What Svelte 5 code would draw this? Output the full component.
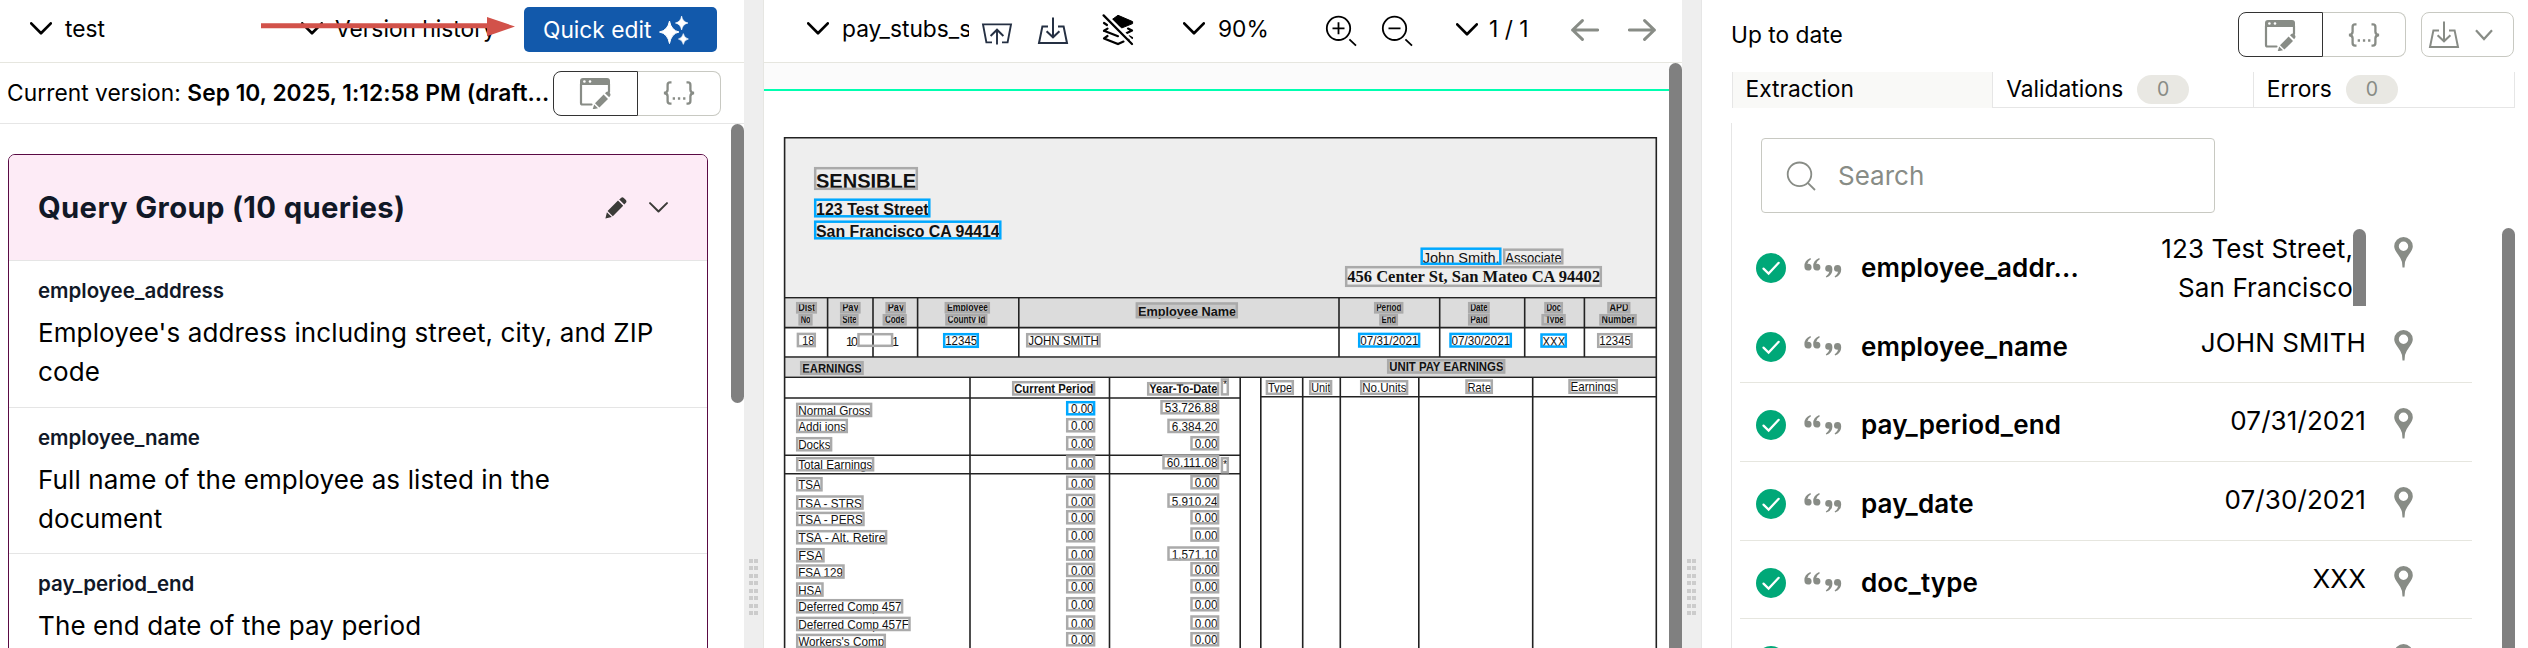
<script>
  const queries = [
    { name: 'employee_address', lines: ["Employee's address including street, city, and ZIP", 'code'] },
    { name: 'employee_name', lines: ['Full name of the employee as listed in the', 'document'] },
    { name: 'pay_period_end', lines: ['The end date of the pay period', ''] }
  ];

  const fields = [
    { name: 'employee_addr...', value: '123 Test Street, San Francisco', scroll: true },
    { name: 'employee_name', value: 'JOHN SMITH' },
    { name: 'pay_period_end', value: '07/31/2021' },
    { name: 'pay_date', value: '07/30/2021' },
    { name: 'doc_type', value: 'XXX' },
    { name: '', value: '' }
  ];

  const tabs = [
    { label: 'Extraction', active: true },
    { label: 'Validations', count: 0 },
    { label: 'Errors', count: 0 }
  ];

  const dots = Array.from({ length: 8 }, (_, i) => i);

  // Recognised text on the document: [text, x, y, width, height, options]
  const B = { blue: true };
  const H = { bold: true, size: 10, base: 9.2, tint: true };
  const marks = [
    ['SENSIBLE', 814, 167, 104, 23, { bold: true, size: 19.5, base: 20.7, pad: 2 }],
    ['123 Test Street', 814, 198.5, 116.5, 19, { ...B, bold: true, size: 15.6, base: 16.5, pad: 2 }],
    ['San Francisco CA 94414', 814, 220.5, 187.5, 19, { ...B, bold: true, size: 15.6, base: 16.5, pad: 2 }],
    ['John Smith,', 1420.5, 247.5, 81, 17.5, { ...B, size: 14.5, base: 15.2 }],
    ['Associate', 1503, 248.5, 60.5, 16, { size: 14, base: 14.2 }],
    ['456 Center St, San Mateo CA 94402', 1345, 266, 257, 21, { bold: true, serif: true, size: 16.5, base: 16.3 }],
    ['Dist', 796, 302, 21, 11.5, H], ['No', 798.5, 314, 14, 11.5, H],
    ['Pay', 840, 302, 20.5, 11.5, H], ['Site', 840, 314, 18.5, 11.5, H],
    ['Pay', 885.5, 302, 20.3, 11.5, H], ['Code', 882.7, 314, 24, 11.5, H],
    ['Employee', 944.7, 302, 45.3, 11.5, H], ['County Id', 945.3, 314, 42, 11.5, H],
    ['Employee Name', 1135.7, 302.3, 102.3, 16, { bold: true, size: 13.5, base: 13.4, tint: true }],
    ['Period', 1374, 302, 29.3, 11.5, H], ['End', 1379.3, 314, 18.7, 11.5, H],
    ['Date', 1468, 302, 21.7, 11.5, H], ['Paid', 1468, 314, 21.7, 11.5, H],
    ['Doc', 1544.3, 302, 18.7, 11.5, H], ['Type', 1541.5, 314, 24.2, 11.5, { ...H, pad: 4 }],
    ['APD', 1607.3, 302, 23, 11.5, H], ['Number', 1599.3, 314, 37.4, 11.5, H],
    ['18', 796.7, 332.7, 19.3, 14.6, { pad: 5.5 }],
    ['', 857.3, 333, 36, 14, {}],
    ['12345', 943, 333, 36, 15, B],
    ['JOHN SMITH', 1026, 333, 74.7, 14.5, {}],
    ['07/31/2021', 1358, 332.7, 62.3, 15, B],
    ['07/30/2021', 1449.3, 332.7, 62.7, 15, B],
    ['XXX', 1540.3, 333.3, 26.7, 14.5, B],
    ['12345', 1597, 333, 35.7, 15, {}],
    ['EARNINGS', 800, 361, 63.7, 14, { bold: true, base: 11.8, size: 12.5, tint: true }],
    ['UNIT PAY EARNINGS', 1387, 359, 118.3, 14.7, { bold: true, size: 12.5, tint: true }],
    ['Current Period', 1012, 381, 83.3, 14.7, { bold: true }],
    ['Year-To-Date', 1147, 382, 72.3, 13.7, { bold: true, base: 11.4 }],
    ['*', 1220.7, 378.3, 8.3, 17.3, { size: 11, base: 10 }],
    ['*', 1220.7, 457, 8.3, 16.5, { size: 11, base: 11 }],
    ['Type', 1265.7, 380, 28.3, 15, {}], ['Unit', 1309, 380, 23.3, 15, {}],
    ['No.Units', 1360, 380, 48.3, 15, {}], ['Rate', 1465.3, 379.3, 27.7, 14.7, {}],
    ['Earnings', 1568.3, 379, 49.7, 15, {}]
  ];

  // Earnings rows: [label, width, top, current top, year to date, left, top]
  const rows = [
    ['Normal Gross', 76.3, 402.7, 401, '53,726.88', 1160.3, 400],
    ['Addi ions', 52, 418.7, 418, '6,384.20', 1167.3, 418.7],
    ['Docks', 36.3, 437, 436, '0.00', 1190.3, 436],
    ['Total Earnings', 78.3, 457, 455.3, '60,111.08', 1162.3, 455],
    ['TSA', 26.7, 477, 475.5, '0.00', 1190.3, 475],
    ['TSA - STRS', 67.7, 495.3, 493.7, '5,910.24', 1167.3, 493.3],
    ['TSA - PERS', 68.7, 511.7, 510, '0.00', 1190.3, 510],
    ['TSA - Alt. Retire', 91.3, 530, 528, '0.00', 1190.3, 527.3],
    ['FSA', 28.7, 548, 546.3, '1,571.10', 1167.3, 546.3],
    ['FSA 129', 48.7, 564.3, 562.7, '0.00', 1190.3, 562],
    ['HSA', 27.7, 582.3, 579, '0.00', 1190.3, 579],
    ['Deferred Comp 457', 107.3, 599, 597, '0.00', 1190.3, 597],
    ['Deferred Comp 457F', 114.7, 616.7, 615.3, '0.00', 1190.3, 615.3],
    ["Workers's Comp", 90, 633.7, 632, '0.00', 1190.3, 632]
  ];
  rows.forEach(([label, w, y, cy, ytd, x, yy], i) => {
    marks.push([label, 796, y, w, 14.5, {}]);
    marks.push(['0.00', 1066, cy, 29.3, 14.5, { pad: 5, blue: i === 0 }]);
    marks.push([ytd, x, yy, 1219.3 - x, 14.5, { pad: 4.5 }]);
  });
</script>

{#snippet chevron(cls)}
  <svg class={cls} width="22" height="13" viewBox="0 0 22 13"><path d="M1.2 1.4 11 11.2 20.8 1.4" /></svg>
{/snippet}

{#snippet formIcon()}
  <svg width="32" height="32" viewBox="0 0 32 32" fill="none">
    <path d="M2 7V26Q2 27.5 3.5 27.5H12.5M30 7V15" stroke="#888c86" stroke-width="2.2" stroke-linecap="round" />
    <path d="M1 8V4Q1 1 4 1H28Q31 1 31 4V8Z" fill="#888c86" />
    <circle cx="5.4" cy="4.5" r="1.3" fill="#fff" /><circle cx="11" cy="4.5" r="1.3" fill="#fff" />
    <path d="M16 26.2 24.6 17.6 29 22 20.4 30.6ZM26 16.3 27.3 15Q28.6 14 30 15.3L31 16.3Q32 17.6 31 19L30.2 20.3ZM15.2 27.6 19 31.2 13.6 32.4Z" fill="#888c86" />
  </svg>
{/snippet}

{#snippet jsonIcon()}
  <svg width="32" height="24" viewBox="0 0 32 24" fill="none" stroke="#888c86" stroke-width="2.3">
    <path d="M8.5 1.4H7Q4.6 1.4 4.6 4V8.8Q4.6 11.6 1 12Q4.6 12.4 4.6 15.2V20Q4.6 22.6 7 22.6H8.5M23.5 1.4H25Q27.4 1.4 27.4 4V8.8Q27.4 11.6 31 12Q27.4 12.4 27.4 15.2V20Q27.4 22.6 25 22.6H23.5" />
    <path d="M9.7 17.5H12M14.9 17.5H17.2M20.1 17.5H22.4" />
  </svg>
{/snippet}

{#snippet download(color)}
  <svg width="32" height="28" viewBox="0 0 32 28" fill="none" stroke={color} stroke-width="2">
    <path d="M11 9.4H5.4L2 26H30L26.6 9.4H21M16 0.5V20M9.6 14.2 16 20.3 22.4 14.2" />
  </svg>
{/snippet}

{#snippet grip()}
  <div class="gutter">
    <div class="grip">{#each dots as d (d)}<i></i><i></i>{/each}</div>
  </div>
{/snippet}

<div class="app">
  <section class="left">
    <div class="toolbar">
      <div class="menu doc">{@render chevron('chev')}<span>test</span></div>
      <div class="menu history">{@render chevron('chev')}<span>Version history</span></div>
      <button class="quick">
        <span>Quick edit</span>
        <svg width="32" height="30" viewBox="0 0 32 30" fill="#fff">
          <path d="M11.5 6Q13.2 15.4 21 17Q13.2 18.6 11.5 28.6Q9.8 18.6 1.5 17Q9.8 15.4 11.5 6Z" stroke="#fff" stroke-width="1" />
          <path d="M23.6 1Q24.6 6.8 30 8Q24.6 9.2 23.6 15Q22.6 9.2 17.4 8Q22.6 6.8 23.6 1ZM25.3 18.6Q26.1 23 30.4 24Q26.1 25 25.3 29.4Q24.5 25 20.4 24Q24.5 23 25.3 18.6Z" stroke="#fff" stroke-width=".6" />
        </svg>
      </button>
      <svg class="arrow" width="254" height="20" viewBox="0 0 254 20" fill="#d2524a"><path d="M0 6.2H226V0L254 9.5 226 19.2V11.2H0Z" /></svg>
    </div>
    <div class="version">
      <p>Current version: <b>Sep 10, 2025, 1:12:58 PM (draft...</b></p>
      <div class="segmented">
        <span class="seg on">{@render formIcon()}</span><span class="seg">{@render jsonIcon()}</span>
      </div>
    </div>
    <div class="scroller">
      <div class="card">
        <header>
          <h2>Query Group (10 queries)</h2>
          <svg width="22" height="22" viewBox="0 0 22 22" fill="#3b3b38">
            <path d="M2.6 14 13 3.6 18.2 8.8 7.8 19.2ZM14.2 2.6 16 .9Q17.4-.2 18.8 1L20.9 3Q22 4.4 20.9 5.8L19.3 7.5ZM1.9 15.2 6.8 20 .4 21.6Z" />
          </svg>
          {@render chevron('chev dark')}
        </header>
        {#each queries as q (q.name)}
          <article>
            <h3>{q.name}</h3>
            <p>{q.lines[0]}<br />{q.lines[1]}</p>
          </article>
        {/each}
      </div>
      <div class="bar"></div>
    </div>
  </section>

  {@render grip()}

  <section class="middle">
    <div class="toolbar">
      <div class="menu file">{@render chevron('chev')}<span>pay_stubs_s</span></div>
      <svg class="up" width="32" height="22" viewBox="0 0 32 22" fill="none" stroke="#253043" stroke-width="1.9">
        <path d="M11 19.4H5.4L2 1.4H30L26.6 19.4H21M16 21.5V7M9.6 13 16 6.7 22.4 13" />
      </svg>
      <div class="down">{@render download('#253043')}</div>
      <svg class="layers" width="32" height="32" viewBox="0 0 32 32">
        <path d="M9.5 6 16 1.3 30.6 7.6V9.6L19.6 14Z" stroke="#000" stroke-linejoin="round" />
        <g fill="none" stroke="#000" stroke-width="2.2" stroke-linecap="round">
          <path d="M2 9 5 11M2 16.8 16 22.2M30 16.6 24.4 19.2M2 24.4 16 30 21.5 27.6M27.5 25 30 24M5.5 14.6 2 16.8M26 14.6 30 16.6M5.5 22 2 24.4M27.4 22.4 30 24" />
        </g>
        <path d="M3.5 0 32 28.5" stroke="#fff" stroke-width="2.2" />
        <path d="M1.6 1.4 30 30" stroke="#000" stroke-width="2.2" stroke-linecap="round" />
      </svg>
      <div class="menu zoom">{@render chevron('chev')}<span>90%</span></div>
      <svg class="zin" width="32" height="32" viewBox="0 0 32 32" fill="none" stroke="#000" stroke-width="1.8">
        <circle cx="13.5" cy="13.3" r="11.7" /><path d="M7.5 13.3H19.5M13.5 7.3V19.3M24.4 24.4 31 30.6" />
      </svg>
      <svg class="zout" width="32" height="32" viewBox="0 0 32 32" fill="none" stroke="#000" stroke-width="1.8">
        <circle cx="13.5" cy="13.3" r="11.7" /><path d="M7.5 13.3H19.5M24.4 24.4 31 30.6" />
      </svg>
      <div class="menu page">{@render chevron('chev')}<span>1 / 1</span></div>
      <svg class="prev" width="28" height="22" viewBox="0 0 28 22"><path d="M11.4 1.6 1.6 11 11.4 20.4M1.6 11H26.6" /></svg>
      <svg class="next" width="28" height="22" viewBox="0 0 28 22"><path d="M16.6 1.6 26.4 11 16.6 20.4M26.4 11H1.4" /></svg>
    </div>
    <div class="viewer">
      <svg class="document" width="905" height="585" viewBox="764 63 905 585">
        <rect x="764" y="63" width="905" height="26" fill="#fbfbfb" />
        <rect x="764" y="89" width="905" height="2" fill="#00ffb0" />
        <rect x="785" y="138" width="871" height="159" fill="#eee" />
        <rect x="785" y="299" width="871" height="28" fill="#dcdcdc" />
        <rect x="785" y="358" width="871" height="18" fill="#dcdcdc" />
        <g stroke="#222" stroke-width="1.6" fill="none">
          <path d="M784.6 648V137.8H1656.3V648" />
          <path d="M784 297.8H1656M784 327.6H1656M784 357H1656M784 377.2H1656" />
          <path d="M827.6 298V357M873 298V357M917.6 298V357M1018.8 298V357M1339 298V357M1439.7 298V357M1524.7 298V357M1584.4 298V357" />
          <path d="M784 398H1240M784 455.2H1240M784 473.7H1240M1260 396.8H1656" />
          <path d="M970 377V648M1109.5 377V648M1240.2 377V648M1260.8 377V648M1302.7 377V648M1340.3 377V648M1418.8 377V648M1532.7 377V648" />
        </g>
        <text x="846" y="345.7" font-size="12.5" textLength="12">10</text>
        <text x="892" y="345.7" font-size="12.5">1</text>
        {#each marks as [text, x, y, w, h, o], i (i)}
          {#if o.tint}
            <rect {x} {y} width={w} height={h} fill="#c8c8c8" />
          {/if}
          {#if text.length > 1}
            <text
              x={x + (o.pad ?? 2.2)}
              y={y + (o.base ?? 12.3)}
              textLength={w - 1.8 - (o.pad ?? 2.2)}
              lengthAdjust="spacingAndGlyphs"
              class:bold={o.bold}
              class:serif={o.serif}
              font-size={o.size ?? 12.8}>{text}</text>
          {:else if text}
            <text x={x + 2.3} y={y + o.base} font-size={o.size}>{text}</text>
          {/if}
          <rect x={x + 1.2} y={y + 1.2} width={w - 2.4} height={h - 2.4} fill="none" stroke={o.blue ? '#00a8ff' : '#aaa'} stroke-width="2.5" />
        {/each}
      </svg>
      <div class="bar"></div>
    </div>
  </section>

  {@render grip()}

  <section class="right">
    <div class="status">
      <span>Up to date</span>
      <div class="segmented">
        <span class="seg on">{@render formIcon()}</span><span class="seg">{@render jsonIcon()}</span>
      </div>
      <div class="export">
        {@render download('#888c86')}
        <svg width="18" height="12" viewBox="0 0 18 12" fill="none" stroke="#888c86" stroke-width="2.2"><path d="M1 1.2 9 10 17 1.2" /></svg>
      </div>
    </div>
    <div class="tabs">
      {#each tabs as t (t.label)}
        <div class="tab" class:active={t.active}>
          <span>{t.label}</span>{#if t.count !== undefined}<em>{t.count}</em>{/if}
        </div>
      {/each}
    </div>
    <div class="panel">
      <div class="search">
        <svg width="30" height="30" viewBox="0 0 30 30" fill="none" stroke="#888c86" stroke-width="1.8"><circle cx="13.5" cy="13.3" r="11.8" /><path d="M21.8 21.8 29 29" /></svg>
        <span>Search</span>
      </div>
      <div class="results">
        <div class="list">
          {#each fields as f, i (i)}
            <div class="row" class:first={f.scroll}>
              <svg class="check" width="30" height="30" viewBox="0 0 30 30"><circle cx="15" cy="15" r="15" fill="#00a878" /><path d="M7.5 15.6 12.6 20.6 22.7 9.8" fill="none" stroke="#fff" stroke-width="2.2" stroke-linecap="round" /></svg>
              <svg class="quotes" width="38" height="20" viewBox="0 0 38 20" fill="#888c86">
                <path d="M7 1.2 6.4 0Q.4 2.4 .4 8.2Q.4 12.6 4 12.6Q7.6 12.6 7.6 9.2Q7.6 6 4.2 5.8Q3.8 5.8 3.4 6Q4 2.8 7 1.2ZM15.8 1.2 15.2 0Q9.2 2.4 9.2 8.2Q9.2 12.6 12.8 12.6Q16.4 12.6 16.4 9.2Q16.4 6 13 5.8Q12.6 5.8 12.2 6Q12.8 2.8 15.8 1.2Z" />
                <path transform="rotate(180 18.8 8.8)" d="M7 -.8 6.4 -2Q.4 .4 .4 6.2Q.4 10.6 4 10.6Q7.6 10.6 7.6 7.2Q7.6 4 4.2 3.8Q3.8 3.8 3.4 4Q4 .8 7 -.8ZM15.8 -.8 15.2 -2Q9.2 .4 9.2 6.2Q9.2 10.6 12.8 10.6Q16.4 10.6 16.4 7.2Q16.4 4 13 3.8Q12.6 3.8 12.2 4Q12.8 .8 15.8 -.8Z" />
              </svg>
              <strong>{f.name}</strong>
              <div class="value">
                <span>{f.value}</span>
                {#if f.scroll}<i class="mini"></i>{/if}
              </div>
              <svg class="pin" width="19" height="31" viewBox="0 0 19 31"><path fill-rule="evenodd" fill="#888c86" d="M9.5 0A9.3 9.3 0 0 1 18.8 9.3Q18.8 12.5 15 17.5Q12 21.4 11 25L10.5 30.4H8.5L8 25Q7 21.4 4 17.5Q.2 12.5 .2 9.3A9.3 9.3 0 0 1 9.5 0ZM9.5 4.6A4.7 4.7 0 1 0 9.5 14A4.7 4.7 0 1 0 9.5 4.6Z" /></svg>
            </div>
          {/each}
        </div>
        <div class="bar"></div>
      </div>
    </div>
  </section>
</div>

<style>
  :global(body) { background: #fff; overflow: hidden; }
  .app {
    display: flex;
    width: 2528px;
    height: 648px;
    overflow: hidden;
    background: #fff;
    color: #000;
    font: 22.75px/30px Inter, sans-serif;
  }
  .app * { box-sizing: border-box; }
  p, h2, h3 { margin: 0; }
  svg { display: block; flex: none; }
  section { display: flex; flex-direction: column; height: 648px; flex: none; overflow: hidden; }
  .left { width: 744px; }
  .middle { width: 919px; border-left: 1px solid #e6e6e2; }
  .right { width: 827px; border-left: 1px solid #e6e6e6; }
  .bar { background: #808080; width: 13px; flex: none; }

  .gutter { width: 19px; flex: none; background: #eee; padding: 559px 0 0 5px; }
  .grip { display: grid; grid-template-columns: 4px 4px; column-gap: 1.3px; row-gap: 3.47px; }
  .grip i { height: 4px; background: #ccc; }

  .toolbar { position: relative; display: flex; align-items: center; height: 63px; flex: none; padding-bottom: 5px; border-bottom: 1px solid #e6e6df; }
  .menu { display: flex; align-items: center; gap: 13px; white-space: nowrap; }
  .chev { fill: none; stroke: #000; stroke-width: 2.7; stroke-linecap: round; stroke-linejoin: round; }
  .chev.dark { stroke: #3b3b38; stroke-width: 2.3; width: 19px; }
  .doc { width: 301px; padding-left: 30px; }
  .history { width: 223px; gap: 12px; }
  .quick {
    display: flex; align-items: center; gap: 7px;
    width: 193px; height: 45px; margin-top: 2px; padding: 0 0 0 19px;
    border: 0; border-radius: 5px; background: #1259ab; color: #fff; font: inherit; white-space: nowrap;
  }
  .arrow { position: absolute; left: 260.5px; top: 16.5px; }

  .version { display: flex; height: 61px; flex: none; align-items: center; padding: 0 23px 0 7px; justify-content: space-between; border-bottom: 1px solid #e6e6e6; }
  .version p { white-space: nowrap; letter-spacing: .05px; }
  .version b { font-weight: 600; }
  .segmented { display: flex; width: 168px; height: 45px; flex: none; }
  .seg { flex: 1; display: flex; align-items: center; justify-content: center; border: 1px solid #c8c9c2; border-left: 0; border-radius: 0 8px 8px 0; }
  .seg.on { border: 1px solid #333; border-radius: 8px 0 0 8px; }

  .scroller { display: flex; justify-content: space-between; flex: 1; min-height: 0; }
  .scroller .bar { height: 279px; border-radius: 7px; }
  .card { width: 700px; height: 560px; margin: 30px 0 0 8px; border: 1.5px solid #5a0a44; border-radius: 7px; overflow: hidden; }
  .card header { display: flex; align-items: center; height: 106px; padding: 0 39px 0 29px; background: #fdebf6; border-bottom: 1px solid #e5e5e5; }
  .card h2 { flex: 1; font-size: 29.25px; letter-spacing: .34px; font-weight: 700; color: #111827; }
  .card header svg:last-child { margin-left: 22px; }
  .card article { height: 146.6px; padding: 16px 29px 0; border-bottom: 1px solid #e5e5e5; }
  .card h3 { font-size: 20.5px; line-height: 28px; font-weight: 600; color: #111827; }
  .card article p { font-size: 26px; letter-spacing: .11px; line-height: 39px; margin-top: 8px; white-space: nowrap; }

  .file { margin-left: 43px; width: 162px; overflow: hidden; }
  .up { margin: 11px 0 0 12px; }
  .down { margin: 5px 0 0 24px; }
  .layers { margin: 2px 0 0 33px; }
  .zoom { margin-left: 49px; }
  .zin, .zout { margin-top: 4px; position: absolute; top: 11px; }
  .zin { left: 560.5px; }
  .zout { left: 616.5px; }
  .page { position: absolute; left: 692px; top: 14px; gap: 11px; }
  .prev, .next { position: absolute; top: 19px; fill: none; stroke: #888c86; stroke-width: 3; stroke-linecap: round; stroke-linejoin: round; }
  .prev { left: 807px; }
  .next { left: 863.5px; }
  .viewer { display: flex; flex: 1; min-height: 0; }
  .viewer .bar { height: 600px; border-radius: 7px; }
  .document { font-family: "Liberation Sans", sans-serif; fill: #111; }
  .document .bold { font-weight: 700; }
  .document .serif { font-family: "Liberation Serif", serif; }

  .status { display: flex; align-items: center; height: 72px; flex: none; padding: 0 14px 3px 29px; }
  .status > span { flex: 1; }
  .export { display: flex; align-items: center; gap: 15px; width: 93px; height: 45px; margin-left: 15px; padding-left: 6px; border: 1px solid #c8c9c2; border-radius: 8px; }
  .tabs { display: flex; width: 783px; height: 36px; flex: none; margin-left: 29.5px; border-right: 1px solid #e6e6e6; }
  .tab { flex: 1; display: flex; align-items: center; gap: 14px; padding: 0 0 1px 13px; border-left: 1px solid #e6e6e6; border-bottom: 1px solid #e6e6e6; }
  .tab span { margin-top: -1px; }
  .tab.active { background: #f9f9f7; border-bottom: 0; }
  .tab em { width: 52px; height: 29px; border-radius: 15px; background: #e9e8e3; color: #888c86; font-size: 19.5px; line-height: 29px; font-style: normal; text-align: center; }
  .panel { flex: 1; min-height: 0; margin: 15px 0 0 29px; border-left: 1px solid #e6e6e6; display: flex; flex-direction: column; }
  .search { display: flex; align-items: center; gap: 22px; width: 454px; height: 75px; flex: none; margin: 15px 0 0 29px; padding-left: 24px; border: 1px solid #c8c9c2; border-radius: 4px; font-size: 26px; color: #888c86; }
  .results { display: flex; flex: 1; min-height: 0; margin-top: 15px; padding: 0 13px 0 8px; justify-content: space-between; overflow: hidden; }
  .results .bar { height: 500px; border-radius: 7px; }
  .list { width: 732px; margin-top: -2px; }
  .row { display: flex; height: 78.67px; padding-left: 16px; border-bottom: 1px solid #e6e6df; }
  .row.first { border-bottom: 0; }
  .check { margin-top: 27px; }
  .quotes { margin: 31.5px 0 0 18px; }
  .row strong { width: 236px; margin: 27px 0 0 19px; font-weight: 600; font-size: 26px; letter-spacing: .12px; white-space: nowrap; }
  .value { display: flex; justify-content: flex-end; width: 269px; margin-top: 18px; font-size: 26px; letter-spacing: .1px; line-height: 39px; text-align: right; }
  .row.first .value { margin-top: 3px; height: 77px; overflow: hidden; }
  .row.first .value span { width: 210px; }
  .mini { width: 13px; height: 90px; background: #808080; border-radius: 7px; }
  .pin { margin: 25px 0 0 28px; }
  .row.first .pin { margin-top: 10.5px; }
</style>
